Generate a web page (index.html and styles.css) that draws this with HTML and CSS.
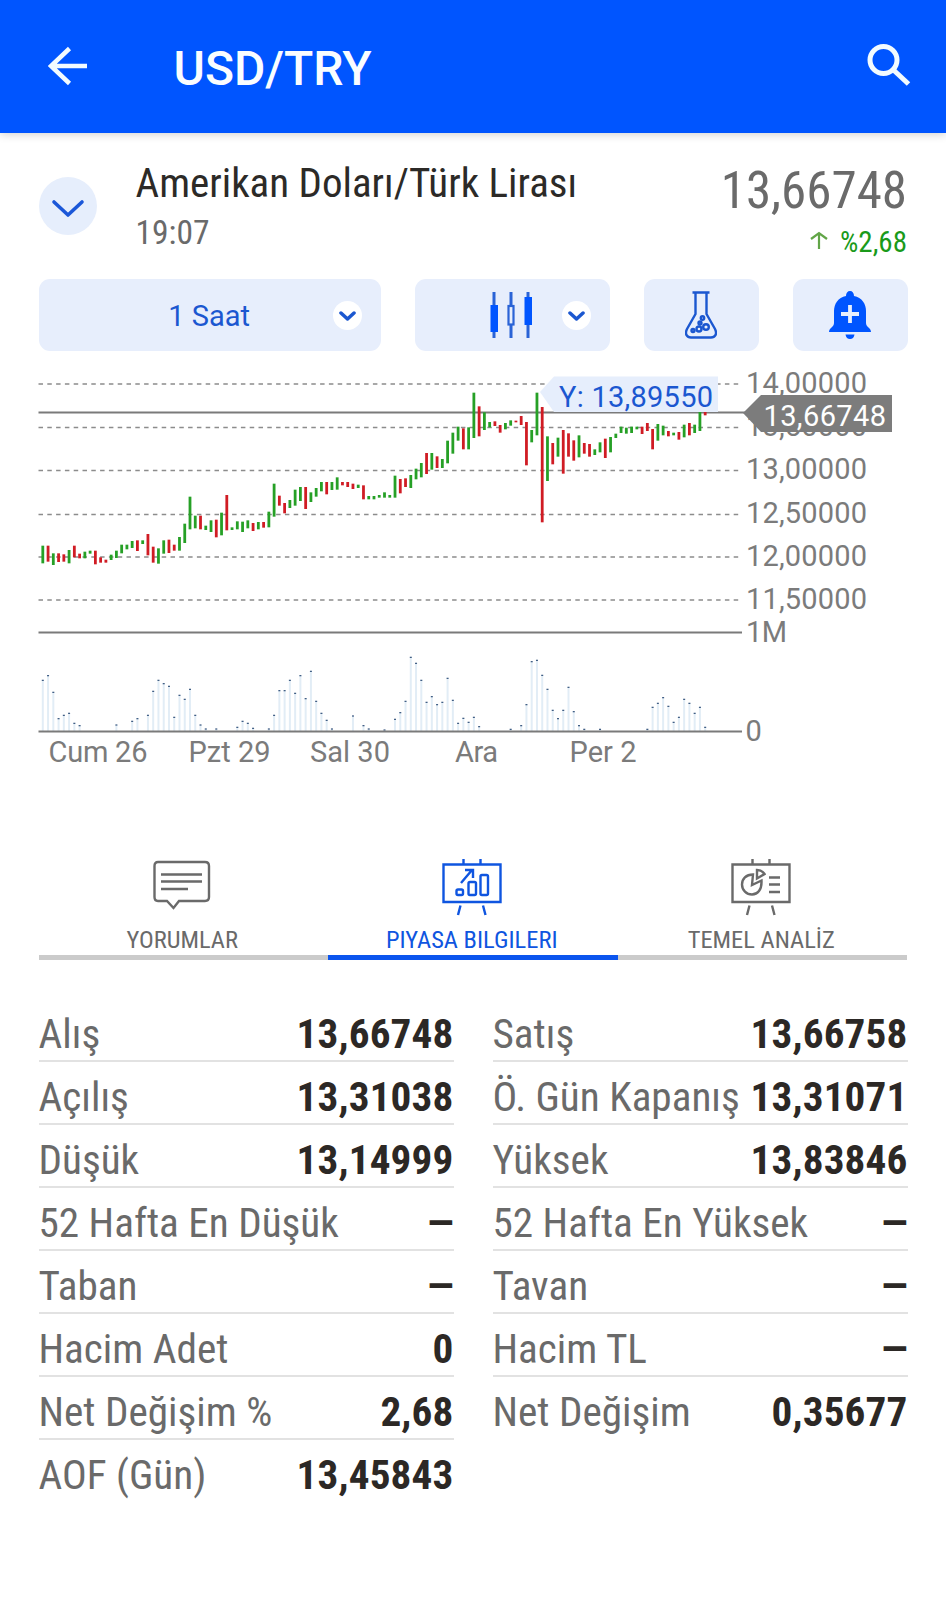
FILE: index.html
```html
<!DOCTYPE html>
<html lang="tr">
<head>
<meta charset="utf-8">
<title>USD/TRY</title>
<link rel="stylesheet" href="styles.css">
</head>
<body>
<header class="topbar">
  <svg class="back" width="40" height="40" viewBox="0 0 40 40"><path d="M39 20H4M21.500 2.500L3 20L21.500 37.500"/></svg>
  <h1 class="title">USD/TRY</h1>
  <svg class="search" width="46" height="46" viewBox="0 0 46 46"><circle cx="17.500" cy="17" r="13.500"/><path d="M27.500 27L42.500 41"/></svg>
</header>
<main>
  <section class="quote">
    <div class="expand"><svg width="34" height="20" viewBox="0 0 34 20"><path d="M3 3L17 16L31 3"/></svg></div>
    <div class="names"><div class="name">Amerikan Doları/Türk Lirası</div><div class="time">19:07</div></div>
    <div class="figures">
      <div class="price">13,66748</div>
      <div class="change"><svg width="18" height="18" viewBox="0 0 18 18"><path d="M9 18V2M1 8L9 2L17 8"/></svg><span>%2,68</span></div>
    </div>
  </section>
  <section class="tools">
    <div class="tool period"><span class="period-text">1 Saat</span><i class="drop"><svg width="17" height="11" viewBox="0 0 17 11"><path d="M2 2L8.500 8L15 2"/></svg></i></div>
    <div class="tool type">
      <svg width="44" height="46" viewBox="0 0 44 46"><g fill="none" stroke="#2a63d6" stroke-width="3"><path d="M5 0V46M22 0V13M22 33V46M39 0V46"/></g><path fill="#0055ff" d="M1.500 13h7.500v27H1.500zM35.500 5H43v28h-7.500z"/><rect x="19.500" y="14" width="5" height="18.500" fill="none" stroke="#2a63d6" stroke-width="2.200"/></svg>
      <i class="drop"><svg width="17" height="11" viewBox="0 0 17 11"><path d="M2 2L8.500 8L15 2"/></svg></i>
    </div>
    <div class="tool small"><svg width="32" height="48" viewBox="0 0 32 48" fill="none" stroke="#1b57d0" stroke-width="2.400"><path d="M7.500 1.500H24.500M10.500 2V23L2 38C-.5 43 2 46.500 6 46.500H26C30 46.500 32.500 43 30 38L21.500 23V2"/><circle cx="17.500" cy="27" r="1.700"/><circle cx="15" cy="32" r="1.500"/><circle cx="21" cy="36" r="2.800"/><circle cx="14" cy="38" r="2.500"/><circle cx="8" cy="39.500" r="1.500"/></svg></div>
    <div class="tool small"><svg width="42" height="48" viewBox="0 0 42 48"><path fill="#0055ff" d="M21 0c-2.500 0-4 2-4 5C9 6.500 5 13 5 20v12c0 2-1 3-2.500 4.500C1 38 0 39 0 41h42c0-2-1-3-2.500-4.500C38 35 37 34 37 32V20c0-7-4-13.500-12-15 0-3-1.500-5-4-5zM16.500 43.500h9C25 46.500 23.500 48 21 48s-4-1.500-4.500-4.500z"/><path stroke="#e8effc" stroke-width="3.800" d="M21 14V32M12 23H30"/></svg></div>
  </section>
  <svg class="chart" width="946" height="410" viewBox="0 360 946 410">
    <g class="grid"><path d="M38.500 384H741M38.500 427.500H741M38.500 470.500H741M38.500 514.500H741M38.500 557H741M38.500 600H741"/></g>
    <g id="volume"></g>
    <path class="axis" d="M38.500 632.500H742M38.500 731.500H742"/>
    <g class="scale">
      <text x="746" y="392.500" textLength="121">14,00000</text>
      <text x="746" y="436" textLength="121">13,50000</text>
      <text x="746" y="479" textLength="121">13,00000</text>
      <text x="746" y="523" textLength="121">12,50000</text>
      <text x="746" y="566" textLength="121">12,00000</text>
      <text x="746" y="609" textLength="121">11,50000</text>
      <text x="746" y="641.500" textLength="41">1M</text>
      <text x="745.500" y="740.500">0</text>
      <text x="48.500" y="762" textLength="99">Cum 26</text>
      <text x="188.500" y="762" textLength="82">Pzt 29</text>
      <text x="310" y="762" textLength="80">Sal 30</text>
      <text x="455" y="762" textLength="43">Ara</text>
      <text x="569.500" y="762" textLength="67">Per 2</text>
    </g>
    <path class="axis" d="M38.500 412.500H745"/>
    <g id="candles"></g>
    <path fill="#e6eefc" d="M540 392L554 376.500H718V412H554z"/>
    <text class="tip" x="559" y="406.500" textLength="154">Y: 13,89550</text>
    <path fill="#7c7c7c" d="M743 413L761 395H892V432H761z"/>
    <text class="last" x="763.500" y="425.500" textLength="122.500">13,66748</text>
  </svg>
  <nav class="tabs">
    <div class="tab">
      <svg width="58" height="58" viewBox="0 0 58 58"><path d="M5 3H52Q56 3 56 7V38Q56 42 52 42H26L20.500 49L14 42H5Q1.500 42 1.500 38V7Q1.500 3 5 3zM8 15.500H49M8 22.500H49M8 30H35"/></svg>
      <span>YORUMLAR</span></div>
    <div class="tab active">
      <svg width="60" height="58" viewBox="0 0 60 58"><path d="M1.500 5.500H58.500V43H1.500zM21.500 0V5M38.500 0V5M18.500 46.500L16 56M41 46.500L43.500 56M19 24L30 11M23 11H31V19"/><rect x="14.500" y="30.500" width="6.500" height="5.500" rx="1.500"/><rect x="26.500" y="23" width="7.500" height="13" rx="1.500"/><rect x="38.500" y="16" width="7.500" height="20" rx="1.500"/></svg>
      <span>PIYASA BILGILERI</span></div>
    <div class="tab">
      <svg width="60" height="58" viewBox="0 0 60 58"><path d="M1.500 5.500H58.500V43H1.500zM21.500 0V5M38.500 0V5M18.500 46.500L16 56M41 46.500L43.500 56M38 18.500H49M38 25.500H49M38 33H49M22 15.500C15 15.500 11 20 11 25.500C11 31 15.500 35.500 21 35.500C26.500 35.500 31 31 30.500 21.500L21 26zM26 11V19.500L33.500 15Q31 11 26 11z"/></svg>
      <span>TEMEL ANALİZ</span></div>
  </nav>
  <section class="stats">
    <dl>
      <div><dt>Alış</dt><dd>13,66748</dd></div>
      <div><dt>Açılış</dt><dd>13,31038</dd></div>
      <div><dt>Düşük</dt><dd>13,14999</dd></div>
      <div><dt>52 Hafta En Düşük</dt><dd class="none">–</dd></div>
      <div><dt>Taban</dt><dd class="none">–</dd></div>
      <div><dt>Hacim Adet</dt><dd>0</dd></div>
      <div><dt>Net Değişim %</dt><dd>2,68</dd></div>
      <div><dt>AOF (Gün)</dt><dd>13,45843</dd></div>
    </dl>
    <dl>
      <div><dt>Satış</dt><dd>13,66758</dd></div>
      <div><dt>Ö. Gün Kapanış</dt><dd>13,31071</dd></div>
      <div><dt>Yüksek</dt><dd>13,83846</dd></div>
      <div><dt>52 Hafta En Yüksek</dt><dd class="none">–</dd></div>
      <div><dt>Tavan</dt><dd class="none">–</dd></div>
      <div><dt>Hacim TL</dt><dd class="none">–</dd></div>
      <div><dt>Net Değişim</dt><dd>0,35677</dd></div>
    </dl>
  </section>
</main>
<script src="chart.js"></script>
</body>
</html>
```
FILE: styles.css
```css
* { box-sizing: border-box; }
body { margin: 0; background: #fff; width: 946px; height: 1600px; overflow: hidden; font-family: "Roboto Condensed", Roboto, sans-serif; font-stretch: 75%; color: #6a6a6a; }
svg { display: block; flex: none; }
.topbar { height: 133px; background: #0055ff; display: flex; align-items: center; padding: 0 34.500px 2px 47.500px; box-shadow: 0 1px 9px rgba(0,0,0,.2); position: relative; }
.back { fill: none; stroke: #f2fbff; stroke-width: 4.500; }
.title { margin: 6px 0 0 86px; flex: 1; font: 500 48px/60px Roboto, sans-serif; font-stretch: 100%; color: #fafdff; }
.search { fill: none; stroke: #f2fbff; stroke-width: 5; }
.quote { display: flex; padding: 25px 39px 0 38.500px; height: 146px; }
.expand { width: 58px; height: 58px; margin-top: 19px; border-radius: 50%; background: #e6eefc; display: flex; align-items: center; justify-content: center; }
.expand svg { margin-top: 5px; fill: none; stroke: #1b57d8; stroke-width: 3.600; stroke-linecap: round; stroke-linejoin: round; }
.names { margin-left: 39px; flex: 1; white-space: nowrap; }
.name { font-size: 41px; line-height: 48px; margin-top: 1px; color: #2c2a27; }
.time { font-size: 33.500px; line-height: 40px; margin-top: 6px; }
.figures { text-align: right; }
.price { font-size: 51px; line-height: 60px; margin-top: 3px; }
.change { display: flex; justify-content: flex-end; align-items: center; gap: 12px; font-size: 29px; line-height: 36px; margin-top: 3px; color: #1a9a1a; }
.change svg { fill: none; stroke: #62a548; stroke-width: 2.200; margin-top: -5px; }
.tools { display: flex; padding: 0 38.500px; gap: 34px; height: 72px; }
.tool { background: #e7eefc; border-radius: 11px; display: flex; align-items: center; justify-content: center; height: 72px; }
.period { width: 342.500px; justify-content: flex-end; padding-right: 19px; gap: 83px; }
.period-text { margin-top: 2px; font: 400 29px/40px Roboto, sans-serif; font-stretch: 100%; color: #1b57d0; }
.type { width: 194.500px; justify-content: flex-end; padding-right: 19px; gap: 29px; }
.small { width: 115px; }
.drop { width: 29px; height: 29px; border-radius: 50%; background: #fff; display: flex; align-items: center; justify-content: center; }
.drop svg { margin-top: 3px; fill: none; stroke: #1b57d0; stroke-width: 3.500; stroke-linecap: round; stroke-linejoin: round; }
.chart { margin-top: 9px; font-family: Roboto, sans-serif; font-stretch: 100%; }
.grid path { stroke: #8c8c8c; stroke-width: 1.500; stroke-dasharray: 4.500 4.300; fill: none; }
.axis { stroke: #7a7a7a; stroke-width: 2.200; fill: none; }
.scale { font-size: 29px; fill: #7b7b7b; }
.tip { font-size: 29px; fill: #1b57d0; }
.last { font-size: 29px; fill: #fff; }
.up { stroke: #26a026; }
.down { stroke: #d01c24; }
#candles { stroke-width: 2.800; }
.bar { stroke: #e2edf6; stroke-width: 2; }
.cap { stroke: #34537c; stroke-width: 1.200; }
.tabs { display: flex; margin: 88px 39px 0 38.500px; height: 102px; }
.tab { flex: 1; border-bottom: 5px solid #cbcbcb; display: flex; flex-direction: column; align-items: center; font-size: 24.500px; line-height: 30px; white-space: nowrap; }
.tab svg { fill: none; stroke: #6a6a6a; stroke-width: 2.400; margin: 1px 2px 8px 0; }
.tab span { margin-right: 2px; }
.active { color: #0f55e0; border-color: #0b55ee; }
.active svg { stroke: #0f55e0; }
.stats { display: flex; padding: 0 38.500px; gap: 39px; margin-top: 39px; }
dl { margin: 0; flex: 1 1 0; min-width: 0; }
dl > div { height: 63px; border-bottom: 2px solid #e2e2e2; display: flex; justify-content: space-between; font-size: 41.200px; line-height: 48px; padding-top: 11px; white-space: nowrap; }
dl > div:last-child { border: 0; }
dd { margin: 0; font-weight: 700; color: #2c2825; letter-spacing: .15px; }
.none { transform: scaleX(1.280); transform-origin: right; margin-right: -1.500px; }
```
FILE: chart.js
```js
// Each candle: direction, high and low, in thirds of a pixel below y = 370.
const candles = `G527-580 R527-575 G550-585 R550-576 R553-575 G540-580 R527-562 R551-565 G545-565 G542-551
R542-583 R562-578 R569-578 G554-570 G542-564 G524-550 G524-538 G513-534 R511-543 G511-522
R492-556 R530-578 G535-581 G511-551 R509-549 R524-542 G501-542 G461-519 G380-478 G437-475
R437-478 G467-480 G451-486 R449-502 G428-496 R375-481 G472-480 G454-478 G455-486 G451-475
R459-483 G456-478 R456-473 G425-472 G341-440 R377-407 R399-430 G390-414 G359-407 G351-393
R351-417 G367-396 G354-380 G336-364 R336-373 G336-360 G322-359 R336-346 R336-351 R341-357
G344-354 R346-388 G378-388 G378-388 G375-383 G367-383 G375-383 G317-383 R327-370 R325-351
G315-354 G296-328 G279-322 R249-312 G249-299 R259-294 G267-294 G212-280 G188-251 G170-212
R175-238 G172-238 G68-204 R109-199 G127-180 G156-172 R154-168 R165-188 G159-178 G151-167
R152-157 R138-165 R156-286 G180-217 G68-196 R111-457 G199-333 R219-283 G203-260 R180-311
R190-260 R211-272 G196-262 R219-251 R222-260 G238-255 G217-247 R206-264 G201-247 G191-204
G170-189 G173-191 G170-189 G170-178 R170-192 R159-183 R177-238 G162-212 G167-196 R183-199
G188-196 R186-209 G164-202 R159-196 G164-189 G125-183 R125-136`.split(/\s+/);
// Bar tops by candle index, in thirds of a pixel below y = 620.
const volume = {0:181,1:167,2:217,3:296,4:286,5:280,6:310,7:317,14:315,17:304,18:296,20:286,21:214,22:181,23:191,24:199,25:292,26:226,27:238,28:208,29:286,30:315,31:327,33:327,37:322,38:304,39:310,40:325,43:327,44:286,45:212,46:212,47:181,48:220,49:167,50:236,51:154,52:244,53:280,54:301,55:327,59:288,61:317,62:327,65:330,67:298,68:278,69:244,70:112,71:130,72:181,73:247,74:230,75:254,76:247,77:175,78:241,79:310,80:295,81:307,82:292,83:320,89:328,91:317,92:254,93:125,94:121,95:166,96:208,97:271,98:296,99:271,100:202,101:275,102:317,103:328,106:328,115:328,116:262,117:250,118:233,119:259,120:307,121:292,122:238,123:250,124:280,125:262,126:322};
const x = i => 42.8 + i * 5.257;
document.getElementById("candles").innerHTML = candles.map((c, i) => {
  const [a, b] = c.slice(1).split("-").map(v => 370 + v / 3);
  return `<path class="${c[0] === "G" ? "up" : "down"}" d="M${x(i)} ${a}V${b}"/>`;
}).join("");
document.getElementById("volume").innerHTML = Object.entries(volume).map(([i, v]) => {
  const y = 620 + v / 3;
  return `<path class="bar" d="M${x(i)} ${y}V731"/><path class="cap" d="M${x(i) - 1} ${y}h2"/>`;
}).join("");
```
